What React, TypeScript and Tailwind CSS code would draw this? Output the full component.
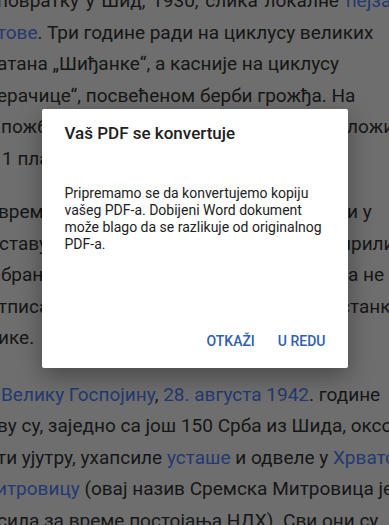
import React from "react";

const L = ({ children }: { children: React.ReactNode }) => (
  <span className="text-[#24396e]">{children}</span>
);

function Split({ left, right, w }: { left: React.ReactNode; right?: React.ReactNode; w: string }) {
  return (
    <div className="flex whitespace-nowrap">
      <span className={`${w} shrink-0 overflow-hidden`}>{left}</span>
      {right ? <span>{right}</span> : null}
    </div>
  );
}

export default function App() {
  return (
    <div className="relative h-[525px] w-[389px] overflow-hidden bg-[#6e6e6e] font-['Roboto',sans-serif]">
      <article className="mt-[-14.7px] text-[19px] leading-[31.5px] text-[#161616]">
        <div>
          <div className="ml-[-3px] whitespace-nowrap [word-spacing:2px]">
            повратку у Шид, 1930, слика локалне <L>пејзаже</L>
          </div>
          <div className="ml-[-3px] whitespace-nowrap">
            <L>тове</L>. Три године ради на циклусу великих
          </div>
          <div className="ml-[-3px] whitespace-nowrap">атана „Шиђанке“, а касније на циклусу</div>
          <div className="ml-[-3px] whitespace-nowrap">ерачице“, посвећеном берби грожђа. На</div>
          <div className="ml-[1px]">
            <Split w="w-[346px]" left="пожбуњених брежуљака у околини Шида" right="ложио" />
          </div>
          <div className="ml-[2px]">
            <Split w="w-[346px]" left="1 плаво небо над равницом" />
          </div>
        </div>
        <div className="mt-[22px]">
          <div className="ml-[-2px]">
            <Split w="w-[349px]" left=" времену између два светска рата" right="и у" />
          </div>
          <div className="ml-[-1px]">
            <Split w="w-[341px]" left="ставу савременог сликарства" right="прили" />
          </div>
          <div className="ml-[1px]">
            <Split w="w-[347px]" left="брања и сакупљања слика у којима" right="а не" />
          </div>
          <div className="ml-[-2px]">
            <Split w="w-[342px]" left="тписа на сликама из тог периода" right="станка" />
          </div>
          <div className="ml-[-2px] whitespace-nowrap">ике.</div>
        </div>
        <div className="mt-[24.7px]">
          <div className="ml-[1px] whitespace-nowrap">
            {" "}
            <L>Велику Госпојину</L>, <L>28. августа</L> <L>1942</L>. године
          </div>
          <div className="ml-[-3px] whitespace-nowrap">ву су, заједно са још 150 Срба из Шида, оксо</div>
          <div className="ml-[-3px] whitespace-nowrap">
            ти ујутру, ухапсиле <L>усташе</L> и одвеле у <L>Хрватску</L>
          </div>
          <div className="ml-[-4px] whitespace-nowrap">
            <L>итровицу</L> (овај назив Сремска Митровица је
          </div>
          <div className="ml-[-3px] whitespace-nowrap">сила за време постојања НДХ). Сви они су</div>
        </div>
      </article>

      <div className="absolute inset-0 flex items-start justify-center pt-[109px]">
        <div className="flex h-[259px] w-[306px] flex-col rounded-[2px] bg-white shadow-[0_8px_24px_rgba(0,0,0,0.35)]">
          <div className="px-[23px] pt-[12px]">
            <h2 className="text-[17px] font-medium leading-[24px] text-[#212121]">Vaš PDF se konvertuje</h2>
            <p className="mt-[40px] text-[14px] leading-[17px] text-[#222222]">
              Pripremamo se da konvertujemo kopiju vašeg PDF-a. Dobijeni Word dokument može blago da se razlikuje od originalnog PDF-a.
            </p>
          </div>
          <div className="mt-auto flex justify-end gap-[7px] pb-[9px] pr-[14px]">
            <button className="h-9 px-2 text-[14px] font-medium text-[#2f5fae]">OTKAŽI</button>
            <button className="h-9 px-2 text-[14px] font-medium text-[#2f5fae]">U REDU</button>
          </div>
        </div>
      </div>
    </div>
  );
}
